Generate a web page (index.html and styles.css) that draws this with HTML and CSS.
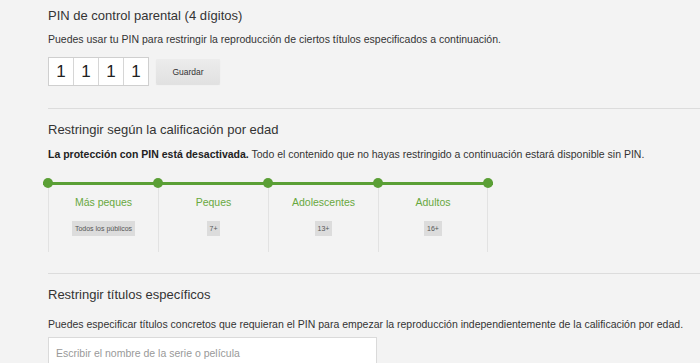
FILE: index.html
```html
<!DOCTYPE html>
<html lang="es">
<head>
    <meta charset="UTF-8">
    <meta name="viewport" content="width=device-width, initial-scale=1.0">
    <title>Control parental</title>
    <link rel="stylesheet" href="styles.css">
</head>
<body>
    <div class="page">
        <section class="block block-pin">
            <h2>PIN de control parental (4 dígitos)</h2>
            <p class="desc">Puedes usar tu PIN para restringir la reproducción de ciertos títulos especificados a continuación.</p>
            <div class="pin-row">
                <div class="pin-boxes">
                    <input class="pin-digit" type="text" maxlength="1" value="1">
                    <input class="pin-digit" type="text" maxlength="1" value="1">
                    <input class="pin-digit" type="text" maxlength="1" value="1">
                    <input class="pin-digit" type="text" maxlength="1" value="1">
                </div>
                <button class="btn-save" type="button">Guardar</button>
            </div>
        </section>

        <section class="block block-maturity">
            <h2>Restringir según la calificación por edad</h2>
            <p class="desc"><strong>La protección con PIN está desactivada.</strong> Todo el contenido que no hayas restringido a continuación estará disponible sin PIN.</p>
            <div class="rating-track">
                <span class="dot"></span>
                <span class="dot"></span>
                <span class="dot"></span>
                <span class="dot"></span>
                <span class="dot"></span>
            </div>
            <div class="rating-cols">
                <div class="rating-col">
                    <div class="rating-name">Más peques</div>
                    <span class="rating-badge">Todos los públicos</span>
                </div>
                <div class="rating-col">
                    <div class="rating-name">Peques</div>
                    <span class="rating-badge">7+</span>
                </div>
                <div class="rating-col">
                    <div class="rating-name">Adolescentes</div>
                    <span class="rating-badge">13+</span>
                </div>
                <div class="rating-col">
                    <div class="rating-name">Adultos</div>
                    <span class="rating-badge">16+</span>
                </div>
            </div>
        </section>

        <section class="block block-titles">
            <h2>Restringir títulos específicos</h2>
            <p class="desc">Puedes especificar títulos concretos que requieran el PIN para empezar la reproducción independientemente de la calificación por edad.</p>
            <input class="title-search" type="text" placeholder="Escribir el nombre de la serie o película">
        </section>
    </div>
</body>
</html>
```

FILE: styles.css
```css
body {
    margin: 0;
    background-color: #f3f3f3;
    font-family: "Liberation Sans", Arial, sans-serif;
    color: #333;
}
.page {
    padding: 8px 0 0 48px;
}
.block {
    padding-bottom: 21px;
}
.block + .block {
    border-top: 1px solid #dcdcdc;
    padding-top: 13px;
}
.block-pin {
    padding-bottom: 22px;
}
h2 {
    margin: 0;
    font-size: 13px;
    line-height: 16px;
    font-weight: normal;
    color: #333;
}
.desc {
    margin: 8px 0 0;
    font-size: 10.5px;
    line-height: 14px;
    color: #333;
}
.desc strong {
    color: #222;
}
.block-maturity .desc {
    margin-top: 9px;
}
.block-titles {
    padding-top: 14px;
}
.block-titles .desc {
    margin-top: 14px;
}

/* pin */
.pin-row {
    display: flex;
    align-items: center;
    gap: 7px;
    margin-top: 11px;
}
.pin-boxes {
    display: flex;
    border: 1px solid #cfcfcf;
    background: #fff;
}
.pin-digit {
    width: 25px;
    height: 27px;
    box-sizing: border-box;
    border: 0;
    border-left: 1px solid #d6d6d6;
    padding: 0;
    margin: 0;
    background: #fff;
    text-align: center;
    font-family: "Liberation Sans", Arial, sans-serif;
    font-size: 17px;
    color: #222;
}
.pin-digit:first-child {
    border-left: 0;
    width: 24px;
}
.btn-save {
    width: 64px;
    height: 25px;
    border: 0;
    border-radius: 1px;
    background: linear-gradient(#ececec, #e1e1e1);
    box-shadow: 0 1px 1px rgba(0, 0, 0, 0.08);
    font-family: "Liberation Sans", Arial, sans-serif;
    font-size: 8.5px;
    color: #333;
    cursor: pointer;
}

/* maturity slider */
.rating-track {
    display: flex;
    justify-content: space-between;
    width: 450px;
    margin: 17px 0 0 -5px;
    background: linear-gradient(#5a9f35, #5a9f35) center / 100% 3px no-repeat;
}
.dot {
    width: 10px;
    height: 10px;
    border-radius: 50%;
    background: #5a9f35;
}
.rating-cols {
    display: grid;
    grid-template-columns: repeat(4, 110px);
    height: 64px;
}
.rating-col {
    border-left: 1px solid #e2e2e2;
    text-align: center;
    padding-top: 7px;
}
.rating-col:last-child {
    border-right: 1px solid #e2e2e2;
}
.rating-name {
    font-size: 10.5px;
    line-height: 14px;
    color: #68a83e;
}
.rating-badge {
    display: inline-block;
    margin-top: 12px;
    padding: 0 3px;
    height: 15px;
    line-height: 15px;
    background: #dcdcdc;
    font-size: 7px;
    color: #555;
}

/* titles */
.title-search {
    display: block;
    width: 329px;
    height: 32px;
    box-sizing: border-box;
    margin-top: 6px;
    padding: 0 7px;
    border: 1px solid #dadada;
    background: #fff;
    font-family: "Liberation Sans", Arial, sans-serif;
    font-size: 10.5px;
    color: #333;
}
.title-search::placeholder {
    color: #999;
}
```
